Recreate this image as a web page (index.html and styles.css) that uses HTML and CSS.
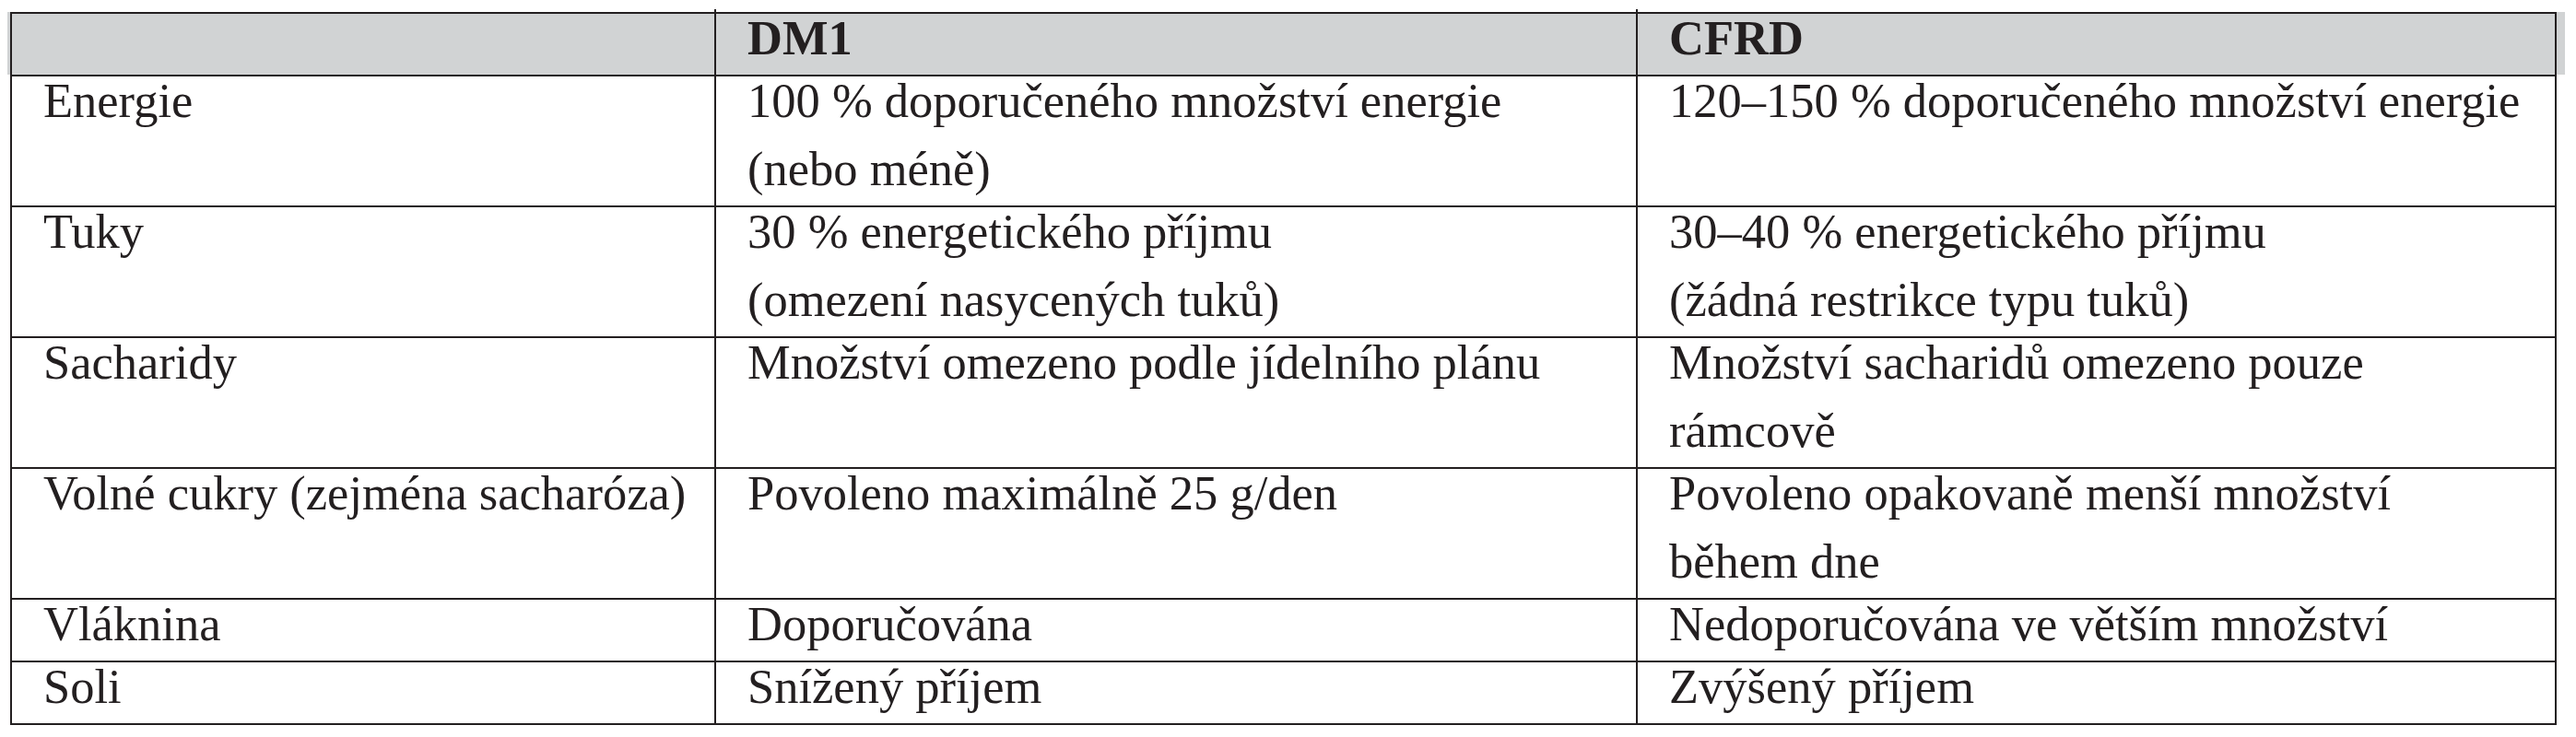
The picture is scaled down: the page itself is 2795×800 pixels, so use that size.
FILE: index.html
```html
<!DOCTYPE html>
<html lang="cs">
<head>
<meta charset="utf-8">
<title>DM1 a CFRD</title>
<link rel="stylesheet" href="styles.css">
</head>
<body>
<div class="table">
  <div class="cell hd c1"><div class="txt">&nbsp;</div></div>
  <div class="cell hd c2"><div class="txt">DM1</div></div>
  <div class="cell hd c3"><div class="txt">CFRD</div></div>

  <div class="cell c1"><div class="txt">Energie</div></div>
  <div class="cell c2"><div class="txt">100 % doporučeného množství energie<br>(nebo méně)</div></div>
  <div class="cell c3"><div class="txt">120–150 % doporučeného množství energie</div></div>

  <div class="cell c1"><div class="txt">Tuky</div></div>
  <div class="cell c2"><div class="txt">30 % energetického příjmu<br>(omezení nasycených tuků)</div></div>
  <div class="cell c3"><div class="txt">30–40 % energetického příjmu<br>(žádná restrikce typu tuků)</div></div>

  <div class="cell c1"><div class="txt">Sacharidy</div></div>
  <div class="cell c2"><div class="txt">Množství omezeno podle jídelního plánu</div></div>
  <div class="cell c3"><div class="txt">Množství sacharidů omezeno pouze<br>rámcově</div></div>

  <div class="cell c1"><div class="txt">Volné cukry (zejména sacharóza)</div></div>
  <div class="cell c2"><div class="txt">Povoleno maximálně 25 g/den</div></div>
  <div class="cell c3"><div class="txt">Povoleno opakovaně menší množství<br>během dne</div></div>

  <div class="cell c1"><div class="txt">Vláknina</div></div>
  <div class="cell c2"><div class="txt">Doporučována</div></div>
  <div class="cell c3"><div class="txt">Nedoporučována ve větším množství</div></div>

  <div class="cell last c1"><div class="txt">Soli</div></div>
  <div class="cell last c2"><div class="txt">Snížený příjem</div></div>
  <div class="cell last c3"><div class="txt">Zvýšený příjem</div></div>
</div>
</body>
</html>
```
FILE: styles.css
```css
html, body {
  margin: 0;
  padding: 0;
  background: #ffffff;
}

.table {
  display: grid;
  grid-template-columns: 764px 1000px 999px;
  width: max-content;
  margin: 13px 0 0 11px;
  border-bottom: 2px solid #231f20;
  font-family: "Liberation Serif", "Times New Roman", serif;
  font-size: 52.5px;
  color: #231f20;
}

.cell {
  position: relative;
  border-top: 2px solid #231f20;
  border-left: 2px solid #231f20;
  padding: 0 16px 0 34px;
  white-space: nowrap;
}

.cell.c3 {
  border-right: 2px solid #231f20;
}

.txt {
  line-height: 74px;
  margin: -11px 0 3px;
}

.hd {
  background: #d1d3d4;
  font-weight: bold;
}

.hd.c1 {
  box-shadow: -3px 0 0 #d1d3d4;
}

.hd.c3 {
  box-shadow: 9px 0 0 #d1d3d4;
}

.hd.c2::before,
.hd.c3::before {
  content: "";
  position: absolute;
  left: -2px;
  top: -5px;
  width: 2px;
  height: 5px;
  background: #231f20;
}

.last.c2::after,
.last.c3::after {
  content: "";
  position: absolute;
  left: -2px;
  bottom: -5px;
  width: 2px;
  height: 5px;
  background: #231f20;
}
```
